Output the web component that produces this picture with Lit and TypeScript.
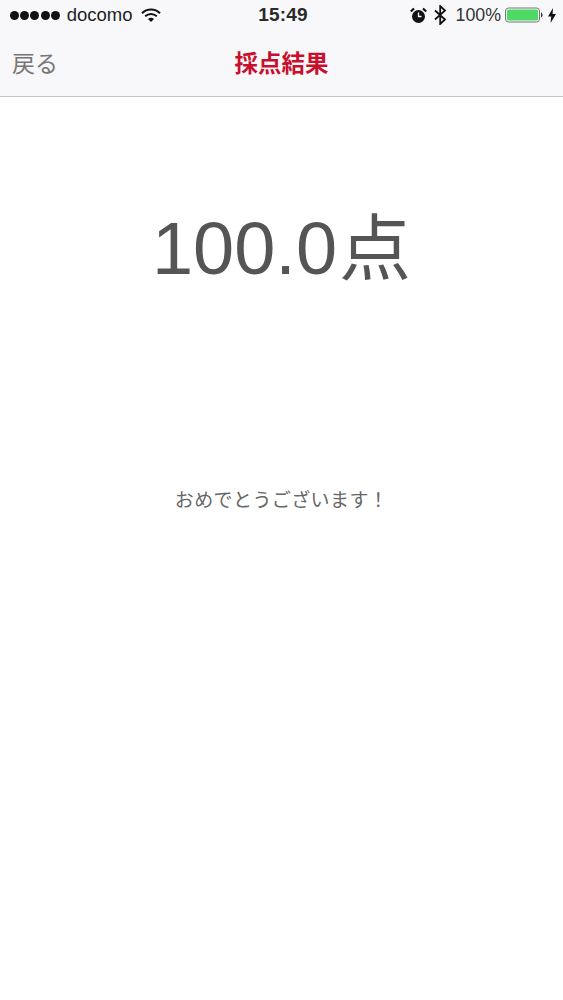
import { LitElement, html, css } from "lit";
import { customElement } from "lit/decorators.js";

@customElement("app-root")
export class AppRoot extends LitElement {
  static styles = css`
    :host {
      display: block;
      width: 563px;
      height: 1000px;
      background: #fff;
      overflow: hidden;
      font-family: "Liberation Sans", "Noto Sans CJK JP", sans-serif;
      color: #555;
    }
    .head {
      height: 96px;
      background: #f8f8fa;
      border-bottom: 1px solid #c4c4c6;
      display: flex;
      flex-direction: column;
    }
    .status {
      height: 30px;
      display: flex;
      align-items: center;
      padding: 0 7px 0 10px;
      color: #222;
      font-size: 18.5px;
      position: relative;
    }
    .dots { display: flex; gap: 1.2px; margin-right: 7px; }
    .dots i { width: 9px; height: 9px; border-radius: 50%; background: #111; display: block; }
    .wifi { margin-left: 8px; }
    .time {
      position: absolute;
      left: 3px; right: 0;
      text-align: center;
      font-weight: 700;
      font-size: 19px;
      letter-spacing: 0.2px;
      color: #2a2a2a;
    }
    .right { margin-left: auto; display: flex; align-items: center; position: relative; }
    .alarm { margin-right: 7px; }
    .bt { margin-right: 9px; }
    .pct { margin-right: 4px; color: #333; font-size: 17.8px; }
    .bolt { margin-left: 4px; }
    .nav {
      flex: 1;
      position: relative;
      display: flex;
      align-items: center;
      justify-content: center;
      padding-bottom: 3px;
    }
    .back {
      position: absolute;
      left: 12px;
      font-size: 23px;
      color: #777;
    }
    .title {
      font-size: 23.5px;
      font-weight: 700;
      color: #c8102e;
    }
    .score {
      display: flex;
      justify-content: center;
      align-items: baseline;
      margin-top: 102px;
      font-size: 74px;
      line-height: 100px;
      color: #555;
    }
    .score .u { font-size: 72px; margin-left: 2px; }
    .msg {
      margin-top: 189px;
      text-align: center;
      font-size: 19px;
      line-height: 26px;
      letter-spacing: 0.4px;
      color: #666;
    }
  `;

  render() {
    return html`
      <div class="head">
        <div class="status">
          <div class="dots"><i></i><i></i><i></i><i></i><i></i></div>
          <span>docomo</span>
          <svg class="wifi" width="20" height="15" viewBox="0 0 20 15">
            <path d="M1 5.2 A13 13 0 0 1 19 5.2" fill="none" stroke="#111" stroke-width="2"/>
            <path d="M4.2 8.3 A8.5 8.5 0 0 1 15.8 8.3" fill="none" stroke="#111" stroke-width="2"/>
            <path d="M7 11 A4.5 4.5 0 0 1 13 11 L10 14 Z" fill="#111"/>
          </svg>
          <div class="time">15:49</div>
          <div class="right">
            <svg class="alarm" width="17" height="17" viewBox="0 0 17 17">
              <circle cx="8.5" cy="9.5" r="6.5" fill="#111"/>
              <path d="M8.5 5.5 V9.5 H11.5" fill="none" stroke="#fff" stroke-width="1.3"/>
              <path d="M0.8 4.5 L4 1.5 M16.2 4.5 L13 1.5" stroke="#111" stroke-width="2.2"/>
            </svg>
            <svg class="bt" width="13" height="20" viewBox="0 0 13 20">
              <path d="M1 5.5 L11 14.5 L6.2 19 V1 L11 5.5 L1 14.5" fill="none" stroke="#111" stroke-width="1.8"/>
            </svg>
            <span class="pct">100%</span>
            <svg width="39" height="16" viewBox="0 0 39 16">
              <rect x="0.5" y="1" width="34" height="14" rx="3" fill="none" stroke="#777" stroke-width="1"/>
              <rect x="2" y="2.5" width="31" height="11" rx="1.5" fill="#4cd964"/>
              <path d="M36 5.5 C38 6 38 10 36 10.5 Z" fill="#333"/>
            </svg>
            <svg class="bolt" width="8" height="15" viewBox="0 0 8 15">
              <path d="M5 0 L0 8.5 H3.2 L2.6 15 L8 6 H4.6 Z" fill="#111"/>
            </svg>
          </div>
        </div>
        <div class="nav">
          <span class="back">戻る</span>
          <span class="title">採点結果</span>
        </div>
      </div>
      <div class="score"><span>100.0</span><span class="u">点</span></div>
      <div class="msg">おめでとうございます！</div>
    `;
  }
}
